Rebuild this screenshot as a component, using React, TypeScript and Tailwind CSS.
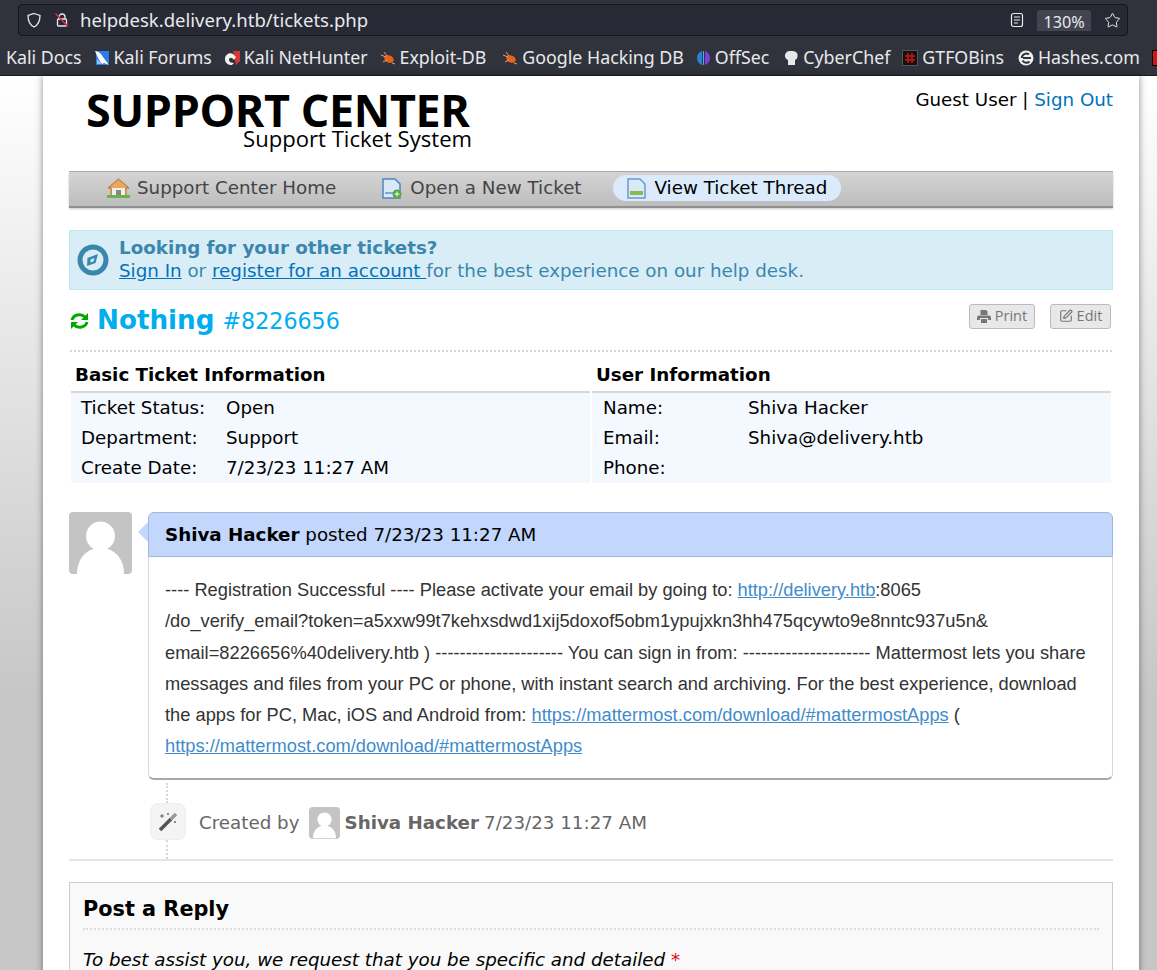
import { SquarePen, Star } from 'lucide-react';

const bookmarks = [
  { name: 'Kali Docs', icon: null, gap: '' },
  { name: 'Kali Forums', icon: <KaliIcon color="#2b7de9" />, gap: '' },
  { name: 'Kali NetHunter', icon: <NetHunterIcon />, gap: '' },
  { name: 'Exploit-DB', icon: <BugIcon />, gap: '' },
  { name: 'Google Hacking DB', icon: <BugIcon />, gap: 'ml-[4px]' },
  { name: 'OffSec', icon: <OffSecIcon />, gap: '' },
  { name: 'CyberChef', icon: <ChefIcon />, gap: 'ml-[3px]' },
  { name: 'GTFOBins', icon: <GtfoIcon />, gap: '' },
  { name: 'Hashes.com', icon: <HashesIcon />, gap: 'ml-[2px]' },
];

function KaliIcon({ color }: { color: string }) {
  return (
    <svg width="16" height="16" viewBox="0 0 16 16">
      <path d="M2 1h13v12l-2 2H2z" fill={color} />
      <path d="M1 1c3 0 6 2 8 6l6 8-5-2-2 1C5 10 3 6 1 1z" fill="#fff" />
      <path d="M3 9l5 5H3z" fill="#9cc4f0" />
    </svg>
  );
}

function NetHunterIcon() {
  return (
    <svg width="16" height="16" viewBox="0 0 16 16">
      <path d="M9 1h7v10l-4 4z" fill="#d9363a" />
      <path d="M1 9c0-4 4-7 8-5l3 3-2 3C8 7 5 7 5 10c0 2 2 3 5 3l-2 2C4 15 1 13 1 9z" fill="#f2f2f2" />
    </svg>
  );
}

function BugIcon() {
  return (
    <svg width="16" height="16" viewBox="0 0 16 16">
      <ellipse cx="9" cy="9" rx="5" ry="3.500" fill="#e8621e" transform="rotate(25 9 9)" />
      <path d="M1 5l5 2M4 2l3 4M3 12l4-2M12 13l3 1" stroke="#e8a06e" strokeWidth="1" />
    </svg>
  );
}

function OffSecIcon() {
  return (
    <svg width="15" height="16" viewBox="0 0 15 16">
      <path d="M6 1C3 2 1 5 1 8s2 6 5 7z" fill="#2f7fd8" />
      <path d="M9 1c3 1 5 4 5 7s-2 6-5 7z" fill="#7b3fe0" />
      <rect x="7" y="1" width="1" height="14" fill="#35c0d8" />
    </svg>
  );
}

function ChefIcon() {
  return (
    <svg width="15" height="16" viewBox="0 0 15 16">
      <path d="M4 15V10C1 9 0 5 2 3c1-2 3-2 5-2s4 0 6 2c1 2 1 6-2 7v5z" fill="#e8e8e8" />
    </svg>
  );
}

function GtfoIcon() {
  return (
    <svg width="16" height="16" viewBox="0 0 16 16">
      <rect x="0.500" y="0.500" width="15" height="15" fill="#111" stroke="#555" />
      <path d="M6 3v10M10 3v10M3 6h10M3 10h10" stroke="#b01010" strokeWidth="2" />
    </svg>
  );
}

function HashesIcon() {
  return (
    <svg width="16" height="16" viewBox="0 0 16 16">
      <circle cx="8" cy="8" r="7.500" fill="#f0f0f0" />
      <path d="M5 8h8M11 4.500A4.500 4.500 0 0 0 3.800 8M4.500 10.500A4.500 4.500 0 0 0 11.500 11.500" stroke="#31333c" strokeWidth="2" fill="none" />
    </svg>
  );
}

function Avatar({ size }: { size: string }) {
  return (
    <div className={`${size} shrink-0 overflow-hidden rounded-[4px] bg-[#c4c4c4]`}>
      <svg viewBox="0 0 63 62" className="h-full w-full">
        <circle cx="31.500" cy="24" r="14.500" fill="#fff" />
        <path d="M8 62c0-16 10-26 23.500-26S55 46 55 62z" fill="#fff" />
      </svg>
    </div>
  );
}

function InfoRow({ label, value, pad }: { label: string; value: string; pad: string }) {
  return (
    <div className={`flex h-[30px] items-center ${pad}`}>
      <span className="w-[145px]">{label}</span>
      <span>{value}</span>
    </div>
  );
}

export default function App() {
  return (
    <div className="flex h-[970px] flex-col overflow-hidden bg-white font-['DejaVu_Sans',sans-serif] text-[18.280px] text-black">
      {/* browser chrome */}
      <div className="h-[76px] shrink-0 border-b border-[#1c1d22] bg-[#31333c] font-['Noto_Sans',sans-serif] text-[#e8e9ec]">
        <div className="pl-[18px] pr-[29px] pt-[4px]">
          <div className="flex h-[32px] items-center rounded-[4px] border border-[#15161b] bg-[#272934] pl-[7px] pr-[6px]">
            <svg width="16" height="16" viewBox="0 0 16 16" fill="none" stroke="#e8e9ec" strokeWidth="1.300">
              <path d="M8 1.500 14 3.500c0 5-1 9-6 11.500C3 12.500 2 8.500 2 3.500z" />
            </svg>
            <svg width="16" height="16" viewBox="0 0 16 16" fill="none" className="ml-[12px]">
              <path d="M5 7V5a3 3 0 0 1 6 0v2" stroke="#e8e9ec" strokeWidth="1.300" />
              <rect x="3.500" y="7" width="9" height="7" rx="1" stroke="#e8e9ec" strokeWidth="1.300" />
              <path d="M1.500 1.500 14 14.500" stroke="#e22850" strokeWidth="1.500" />
            </svg>
            <span className="ml-[10px] text-[18.550px]">helpdesk.delivery.htb/tickets.php</span>
            <svg width="14" height="16" viewBox="0 0 14 16" fill="none" stroke="#e8e9ec" strokeWidth="1.200" className="ml-auto">
              <rect x="1.500" y="1.500" width="11" height="13" rx="2" />
              <path d="M4 5h6M4 8h6M4 11h4" />
            </svg>
            <div className="ml-[13px] mt-[5px] flex h-[21px] w-[54px] items-end justify-center self-start rounded-t-[3px] bg-[#42454f] text-[16.200px] leading-[18px]">130%</div>
            <Star size={17} strokeWidth={1.400} className="ml-[13px]" />
          </div>
        </div>
        <div className="flex h-[39px] items-center gap-[12px] overflow-hidden whitespace-nowrap pl-[6px] pt-[4px] text-[17.800px]">
          {bookmarks.map((b) => (
            <div key={b.name} className={`flex shrink-0 items-center gap-[4px] ${b.gap}`}>
              {b.icon}
              <span>{b.name}</span>
            </div>
          ))}
          <div className="h-[16px] w-[16px] shrink-0 border border-black bg-[#d01818]" />
        </div>
      </div>

      {/* page */}
      <div className="flex-1 bg-gradient-to-b from-white to-[#c6c6c6] to-70% pl-[43px]">
        <div className="h-full w-[1096px] bg-white px-[26px] shadow-[0_0_7px_rgba(0,0,0,0.45)]">
          <div className="flex h-[95px] justify-between">
            <div className="ml-[17px] w-[386px] font-['Open_Sans',sans-serif]">
              <div className="mt-[15px] whitespace-nowrap text-[44.900px] font-bold leading-[37px] tracking-[-0.400px]">SUPPORT CENTER</div>
              <div className="text-right text-[22.080px] leading-[20px]">Support Ticket System</div>
            </div>
            <div className="pt-[12px] leading-[24px]">
              Guest User | <span className="text-[#0072bc]">Sign Out</span>
            </div>
          </div>

          <div className="flex h-[35px] items-center border-t border-[#a8a8a8] bg-gradient-to-b from-[#d4d4d4] to-[#bdbdbd] pb-[2px] pl-[38px] text-[#444] shadow-[0_2px_0_#8f8f8f,0_3px_2px_#c8c8c8]">
            <svg width="23" height="20" viewBox="0 0 23 20" className="mr-[7px]">
              <path d="M11.500 1 1 10h3v8h15v-8h3z" fill="#e9a85c" stroke="#b5702c" />
              <rect x="5" y="10" width="13" height="8" fill="#f4f0e6" />
              <rect x="9" y="12" width="5" height="6" fill="#888" />
              <rect x="0" y="17" width="23" height="3" fill="#6cb24a" />
            </svg>
            <span>Support Center Home</span>
            <svg width="20" height="21" viewBox="0 0 20 21" className="ml-[46px] mr-[8px]">
              <path d="M1 1h12l5 5v14H1z" fill="#d9e9f8" stroke="#4c84c8" strokeWidth="1.500" />
              <path d="M3 15h10" stroke="#7aa8dc" strokeWidth="2" />
              <circle cx="15" cy="16" r="4.500" fill="#58a83c" />
              <path d="M15 13.500v5M12.500 16h5" stroke="#fff" />
            </svg>
            <span>Open a New Ticket</span>
            <div className="ml-[31px] flex h-[26px] w-[228px] items-center rounded-[13px] bg-[#dcebfb] pl-[14px] text-black">
              <svg width="19" height="21" viewBox="0 0 19 21" className="mr-[9px]">
                <path d="M1 1h12l5 5v14H1z" fill="#d9e9f8" stroke="#6a9ad4" strokeWidth="1.500" />
                <rect x="3" y="13" width="13" height="4" fill="#8bb850" />
              </svg>
              <span>View Ticket Thread</span>
            </div>
          </div>

          <div className="mt-[24px] flex h-[60px] items-center border border-[#bce8f1] bg-[#d9edf7] pl-[7px] leading-[23px] text-[#3a87ad]">
            <svg width="32" height="32" viewBox="0 0 32 32" className="mr-[10px] shrink-0">
              <circle cx="16" cy="16" r="13" fill="none" stroke="#3a87ad" strokeWidth="5" />
              <path d="M10.500 14 21 10l-2.500 9-8.500 3z" fill="#3a87ad" />
              <path d="M13.500 15.500l4-1.500-1 3.500-3 1z" fill="#d9edf7" />
            </svg>
            <div className="pb-[2px]">
              <div className="font-bold">Looking for your other tickets?</div>
              <div>
                <span className="text-[#0072bc] underline">Sign In</span> or{' '}
                <span className="text-[#0072bc] underline">register for an account </span>for the best experience on our help desk.
              </div>
            </div>
          </div>

          <div className="mx-[1px] flex h-[62px] items-center justify-between border-b-2 border-dotted border-[#d8d8d8] pr-[1px]">
            <div className="mt-[2px] flex items-baseline">
              <svg width="19" height="18" viewBox="0 0 19 18" className="mr-[8px] self-center" fill="none" stroke="#00a800" strokeWidth="3">
                <path d="M2 8a7.500 6.500 0 0 1 13-3" />
                <path d="M17 10a7.500 6.500 0 0 1-13 3" />
                <path d="M18 1v7h-7z" fill="#00a800" stroke="none" />
                <path d="M1 17v-7h7z" fill="#00a800" stroke="none" />
              </svg>
              <span className="text-[26.200px] font-bold text-[#00aeef]">Nothing</span>
              <span className="ml-[8px] text-[22.200px] text-[#00aeef]">#8226656</span>
            </div>
            <div className="mb-[8px] flex gap-[15px] font-['Open_Sans',sans-serif] text-[14.500px] text-[#777]">
              <div className="flex h-[25px] w-[66px] items-center justify-center gap-[4px] rounded-[3px] border border-[#bbb] bg-[#e8e8e8]">
                <svg width="14" height="13" viewBox="0 0 14 13" fill="#777">
                  <path d="M3.500 0h5.500l1.500 1.500V5h-7z" />
                  <path d="M2 5.500h10a2 2 0 0 1 2 2V10h-3V8H3v2H0V7.500a2 2 0 0 1 2-2z" />
                  <path d="M4 9h6v4H4z" />
                </svg>
                Print
              </div>
              <div className="flex h-[25px] w-[61px] items-center justify-center gap-[4px] rounded-[3px] border border-[#bbb] bg-[#e8e8e8]">
                <SquarePen size={14} />
                Edit
              </div>
            </div>
          </div>

          <div className="ml-[2px] mt-[10px] flex w-[1040px] gap-[2px]">
            <div className="w-[519px]">
              <div className="h-[31px] border-b-2 border-[#d8d8d8] pl-[4px] font-bold leading-[25px]">Basic Ticket Information</div>
              <div className="h-[90px] bg-[#f4f9ff]">
                <InfoRow label="Ticket Status:" value="Open" pad="pl-[10px]" />
                <InfoRow label="Department:" value="Support" pad="pl-[10px]" />
                <InfoRow label="Create Date:" value="7/23/23 11:27 AM" pad="pl-[10px]" />
              </div>
            </div>
            <div className="w-[519px]">
              <div className="h-[31px] border-b-2 border-[#d8d8d8] pl-[4px] font-bold leading-[25px]">User Information</div>
              <div className="h-[90px] bg-[#f4f9ff]">
                <InfoRow label="Name:" value="Shiva Hacker" pad="pl-[11px]" />
                <InfoRow label="Email:" value="Shiva@delivery.htb" pad="pl-[11px]" />
                <InfoRow label="Phone:" value="" pad="pl-[11px]" />
              </div>
            </div>
          </div>

          <div className="mt-[29px] flex">
            <Avatar size="h-[62px] w-[63px]" />
            <div className="relative ml-[16px] w-[965px]">
              <div className="absolute left-[-10px] top-[10px] h-[20px] w-[10px] bg-[#c2d7fb] [clip-path:polygon(100%_0,0_50%,100%_100%)]" />
              <div className="flex h-[45px] items-center rounded-t-[6px] border border-[#9fb7dc] bg-[#c2d7fb] pl-[16px]">
                <span><b>Shiva Hacker</b> posted 7/23/23 11:27 AM</span>
              </div>
              <div className="h-[223px] rounded-b-[6px] border-x border-b-2 border-x-[#d8d8d8] border-b-[#a8a8a8] px-[16px] pt-[17px] font-['Liberation_Sans',sans-serif] text-[18.280px] leading-[31.300px] text-[#333]">
                ---- Registration Successful ---- Please activate your email by going to: <span className="text-[#428bca] underline">http://delivery.htb</span>:8065
                <br />
                /do_verify_email?token=a5xxw99t7kehxsdwd1xij5doxof5obm1ypujxkn3hh475qcywto9e8nntc937u5n&amp;
                <br />
                email=8226656%40delivery.htb ) --------------------- You can sign in from: --------------------- Mattermost lets you share messages and files from your PC or phone, with instant search and archiving. For the best experience, download the apps for PC, Mac, iOS and Android from: <span className="text-[#428bca] underline">https://mattermost.com/download/#mattermostApps</span> ({' '}
                <span className="text-[#428bca] underline">https://mattermost.com/download/#mattermostApps</span>
              </div>
            </div>
          </div>

          <div className="flex h-[81px] border-b-2 border-[#e4e4e4] pl-[81px]">
            <div className="flex w-[36px] flex-col">
              <div className="ml-[16px] mt-[3px] h-[20px] w-0 border-l-2 border-dotted border-[#d8d8d8]" />
              <div className="flex h-[37px] w-[36px] items-center justify-center rounded-[8px] border border-[#eee] bg-[#f4f4f4]">
                <svg width="20" height="20" viewBox="0 0 20 20" fill="none">
                  <path d="M2 18 13 7" stroke="#555" strokeWidth="3.500" />
                  <path d="M13 7l5-5" stroke="#999" strokeWidth="3.500" />
                  <path d="M4 2v4M2 4h4M10 1v2M9 2h2M17 9v2M16 10h2" stroke="#666" />
                </svg>
              </div>
              <div className="ml-[16px] h-[19px] w-0 border-l-2 border-dotted border-[#d8d8d8]" />
            </div>
            <div className="ml-[13px] mt-[27px] flex h-[32px] items-center text-[#666]">
              <span>Created by</span>
              <div className="ml-[9px] mr-[5px]"><Avatar size="h-[32px] w-[31px]" /></div>
              <b>Shiva Hacker</b>
              <span className="ml-[5px]">7/23/23 11:27 AM</span>
            </div>
          </div>

          <div className="mt-[21px] border border-[#ccc] bg-[#f9f9f9] px-[13px] pt-[10px]">
            <div className="h-[37px] border-b-2 border-dotted border-[#ddd] text-[20.800px] font-bold leading-[32px]">Post a Reply</div>
            <div className="mt-[16px] italic">
              To best assist you, we request that you be specific and detailed <span className="text-red-600">*</span>
            </div>
          </div>
        </div>
      </div>
    </div>
  );
}
